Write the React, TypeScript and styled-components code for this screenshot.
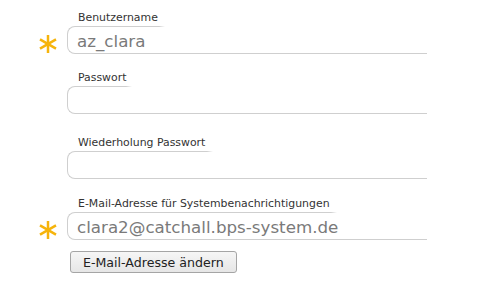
import React from "react"
import styled, { createGlobalStyle } from "styled-components"

const GlobalStyle = createGlobalStyle`
  html, body {
    margin: 0;
    padding: 0;
    background: #fff;
  }
  body {
    font-family: "DejaVu Sans", Verdana, sans-serif;
  }
`

const Form = styled.form`
  display: flex;
  flex-direction: column;
  padding-top: 11px;
  width: 496px;
`

const Field = styled.div<{ $after: number }>`
  display: grid;
  grid-template-columns: 67px 360px;
  grid-template-rows: 13px 28px;
  row-gap: 2px;
  margin-bottom: ${(p) => p.$after}px;
`

const Label = styled.label`
  grid-column: 2;
  padding-left: 11px;
  font-size: 10.9px;
  line-height: 13px;
  color: #333;
  white-space: nowrap;
`

const StarCell = styled.div`
  grid-column: 1;
  grid-row: 2;
  display: flex;
  justify-content: center;
  padding: 8px 0 0 28px;
`

const Box = styled.div<{ $edge: number }>`
  grid-column: 2;
  grid-row: 2;
  position: relative;
  box-sizing: border-box;
  height: 28px;
  border: 1px solid #cfcfcf;
  border-right: none;
  border-radius: 8px 0 0 8px;
  padding: 2px 0 0 9px;
  font-size: 16.7px;
  line-height: 24px;
  color: #7a7a7a;
  white-space: nowrap;

  &::before {
    content: "";
    position: absolute;
    top: -1px;
    left: ${(p) => p.$edge}px;
    right: 0;
    height: 1px;
    background: linear-gradient(to right, rgba(255, 255, 255, 0), #fff 6px);
  }
`

const Actions = styled.div`
  padding-left: 70px;
  margin-top: -1px;
`

const Button = styled.button`
  box-sizing: border-box;
  height: 22px;
  padding: 0 12px;
  border: 1px solid #a5a5a5;
  border-radius: 3px;
  background: linear-gradient(#f6f6f6, #e6e6e6);
  font-family: "DejaVu Sans", Verdana, sans-serif;
  font-size: 12.6px;
  color: #222;
`

const Star = () => (
  <svg width="20" height="20" viewBox="-10 -10 20 20">
    <g stroke="#f6b40c" strokeWidth="2.5" strokeLinecap="butt">
      <line x1="0" y1="-9" x2="0" y2="9" />
      <line x1="-8" y1="-4.6" x2="8" y2="4.6" />
      <line x1="-8" y1="4.6" x2="8" y2="-4.6" />
    </g>
  </svg>
)

type Props = {
  label: string
  value?: string
  required?: boolean
  edge: number
  after: number
}

const InputField = ({ label, value, required, edge, after }: Props) => (
  <Field $after={after}>
    <Label>{label}</Label>
    {required && (
      <StarCell>
        <Star />
      </StarCell>
    )}
    <Box $edge={edge}>{value}</Box>
  </Field>
)

export default function App() {
  return (
    <>
      <GlobalStyle />
      <Form>
        <InputField label="Benutzername" value="az_clara" required edge={91} after={17} />
        <InputField label="Passwort" edge={58} after={22} />
        <InputField label="Wiederholung Passwort" edge={139} after={18} />
        <InputField
          label="E-Mail-Adresse für Systembenachrichtigungen"
          value="clara2@catchall.bps-system.de"
          required
          edge={263}
          after={12}
        />
        <Actions>
          <Button type="button">E-Mail-Adresse ändern</Button>
        </Actions>
      </Form>
    </>
  )
}
